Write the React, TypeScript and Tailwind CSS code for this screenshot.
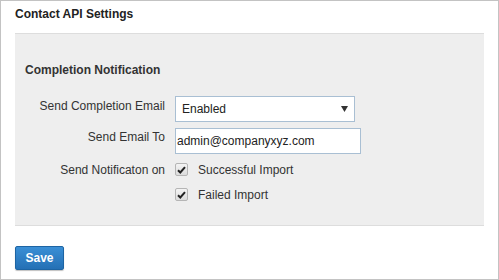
import React from "react";

function Check() {
  return (
    <span className="flex h-[13px] w-[13px] items-center justify-center rounded-[2px] border border-[#b5b5b5] bg-gradient-to-b from-[#f4f4f4] to-[#dcdcdc]">
      <svg width="9" height="8" viewBox="0 0 9 8">
        <path d="M1 4.2 L3.3 6.5 L8 1.2" fill="none" stroke="#222" strokeWidth="2" />
      </svg>
    </span>
  );
}

export default function App() {
  return (
    <div
      className="box-border h-[280px] w-[499px] border border-[#c3c3c3] bg-white text-[12px] leading-[14px] text-[#333]"
      style={{ fontFamily: '"Liberation Sans", Arial, sans-serif' }}
    >
      <div className="px-[14px] pt-[6px] font-bold text-[#222]">Contact API Settings</div>
      <div className="mx-[14px] mt-[12px] border-y border-[#dddddd] bg-[#eeeeee] pb-[23px] pt-[29px]">
        <div className="pl-[10px] font-bold text-[#333]">Completion Notification</div>
        <div className="mt-[19px] flex items-start">
          <div className="w-[150px] pt-[3px] text-right">Send Completion Email</div>
          <div className="ml-[10px] box-border flex h-[26px] w-[180px] items-center justify-between border border-[#a9bfd3] bg-white pl-[6px] pr-[6px] text-[#222]">
            <span>Enabled</span>
            <svg width="7" height="6" viewBox="0 0 7 6">
              <polygon points="0,0 7,0 3.5,6" fill="#333" />
            </svg>
          </div>
        </div>
        <div className="mt-[6px] flex items-start">
          <div className="w-[150px] pt-[2px] text-right">Send Email To</div>
          <div className="ml-[10px] box-border flex h-[26px] w-[186px] items-center border border-[#a9bfd3] bg-white pl-[1px] text-[#222]">
            admin@companyxyz.com
          </div>
        </div>
        <div className="mt-[9px] flex items-start">
          <div className="w-[150px] text-right">Send Notificaton on</div>
          <div className="ml-[10px] flex flex-col gap-[11px]">
            <div className="flex items-start gap-[10px]">
              <Check />
              <span>Successful Import</span>
            </div>
            <div className="flex items-start gap-[10px]">
              <Check />
              <span>Failed Import</span>
            </div>
          </div>
        </div>
      </div>
      <div className="px-[14px] pt-[20px]">
        <button className="box-border flex h-[24px] w-[49px] items-center justify-center rounded-[2px] border border-[#1d64a3] bg-gradient-to-b from-[#3a8fd6] to-[#2470b5] font-bold text-white shadow-[0_1px_1px_rgba(0,0,0,0.25)]">
          Save
        </button>
      </div>
    </div>
  );
}
